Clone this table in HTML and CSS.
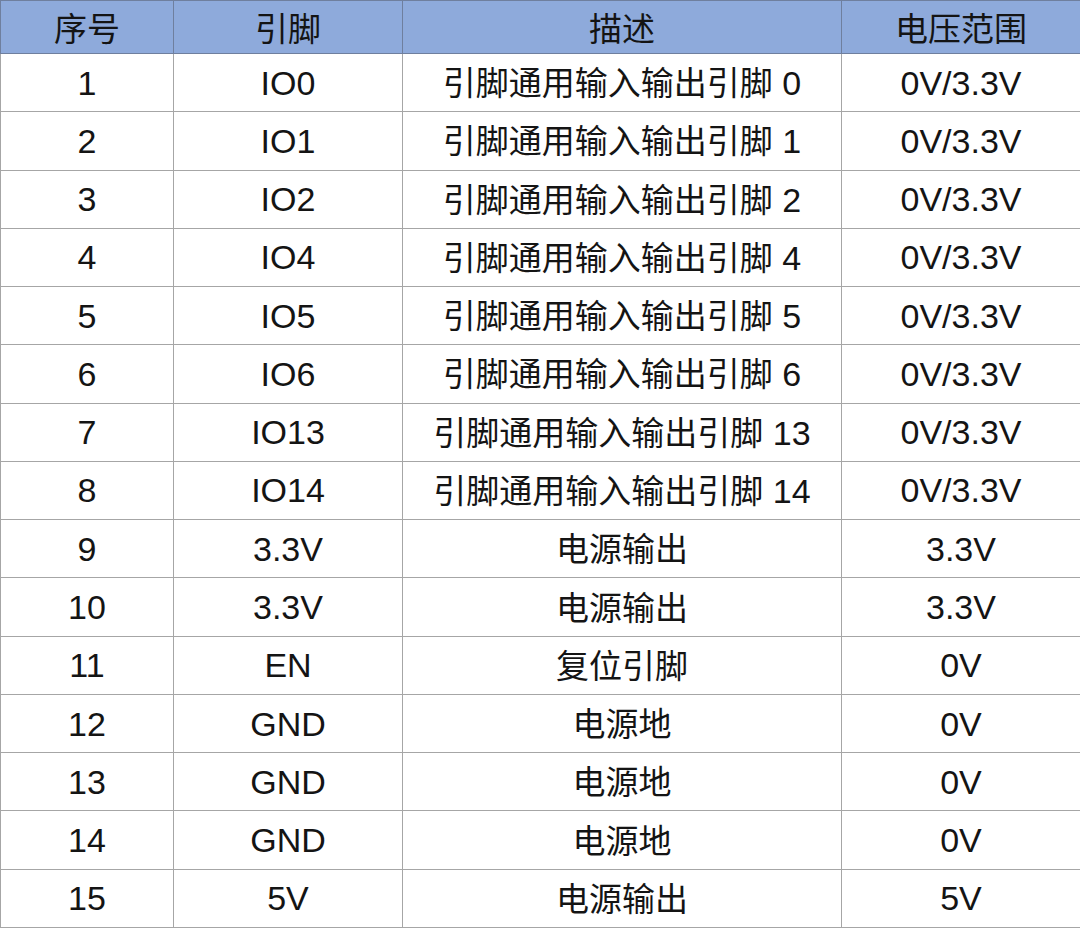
FILE: index.html
```html
<!DOCTYPE html>
<html lang="zh-CN">
<head>
<meta charset="utf-8">
<title>引脚表</title>
<link rel="stylesheet" href="styles.css">
</head>
<body>
<table class="pins">
  <colgroup>
    <col class="c1"><col class="c2"><col class="c3"><col class="c4">
  </colgroup>
  <thead>
    <tr class="head"><th>序号</th><th>引脚</th><th>描述</th><th>电压范围</th></tr>
  </thead>
  <tbody>
    <tr><td>1</td><td>IO0</td><td><span class="cjk">引脚通用输入输出引脚</span> 0</td><td>0V/3.3V</td></tr>
    <tr><td>2</td><td>IO1</td><td><span class="cjk">引脚通用输入输出引脚</span> 1</td><td>0V/3.3V</td></tr>
    <tr><td>3</td><td>IO2</td><td><span class="cjk">引脚通用输入输出引脚</span> 2</td><td>0V/3.3V</td></tr>
    <tr><td>4</td><td>IO4</td><td><span class="cjk">引脚通用输入输出引脚</span> 4</td><td>0V/3.3V</td></tr>
    <tr><td>5</td><td>IO5</td><td><span class="cjk">引脚通用输入输出引脚</span> 5</td><td>0V/3.3V</td></tr>
    <tr><td>6</td><td>IO6</td><td><span class="cjk">引脚通用输入输出引脚</span> 6</td><td>0V/3.3V</td></tr>
    <tr><td>7</td><td>IO13</td><td><span class="cjk">引脚通用输入输出引脚</span> 13</td><td>0V/3.3V</td></tr>
    <tr><td>8</td><td>IO14</td><td><span class="cjk">引脚通用输入输出引脚</span> 14</td><td>0V/3.3V</td></tr>
    <tr><td>9</td><td>3.3V</td><td><span class="cjk">电源输出</span></td><td>3.3V</td></tr>
    <tr><td>10</td><td>3.3V</td><td><span class="cjk">电源输出</span></td><td>3.3V</td></tr>
    <tr><td>11</td><td>EN</td><td><span class="cjk">复位引脚</span></td><td>0V</td></tr>
    <tr><td>12</td><td>GND</td><td><span class="cjk">电源地</span></td><td>0V</td></tr>
    <tr><td>13</td><td>GND</td><td><span class="cjk">电源地</span></td><td>0V</td></tr>
    <tr><td>14</td><td>GND</td><td><span class="cjk">电源地</span></td><td>0V</td></tr>
    <tr><td>15</td><td>5V</td><td><span class="cjk">电源输出</span></td><td>5V</td></tr>
  </tbody>
</table>
</body>
</html>
```
FILE: styles.css
```css
html, body {
  margin: 0;
  padding: 0;
  background: #ffffff;
}
.pins {
  width: 1080px;
  height: 928px;
  border-collapse: collapse;
  table-layout: fixed;
  font-family: "Liberation Sans", "Noto Sans CJK SC", sans-serif;
  font-size: 34px;
  font-weight: 400;
  color: #141414;
}
.c1 { width: 173px; }
.c2 { width: 229px; }
.c3 { width: 439px; }
.c4 { width: 239px; }
.pins th, .pins td {
  border: 1px solid #a6a6a6;
  text-align: center;
  vertical-align: middle;
  padding: 0;
  line-height: 1;
  white-space: nowrap;
}
.pins th {
  font-weight: 400;
  font-family: "Noto Sans CJK SC", sans-serif;
  font-size: 33px;
  background: #8eaadb;
  border-color: #6f7f9e;
  height: 52px;
}
.pins td {
  height: 57px;
}
.cjk {
  font-family: "Noto Sans CJK SC", sans-serif;
  font-size: 33px;
}
```
